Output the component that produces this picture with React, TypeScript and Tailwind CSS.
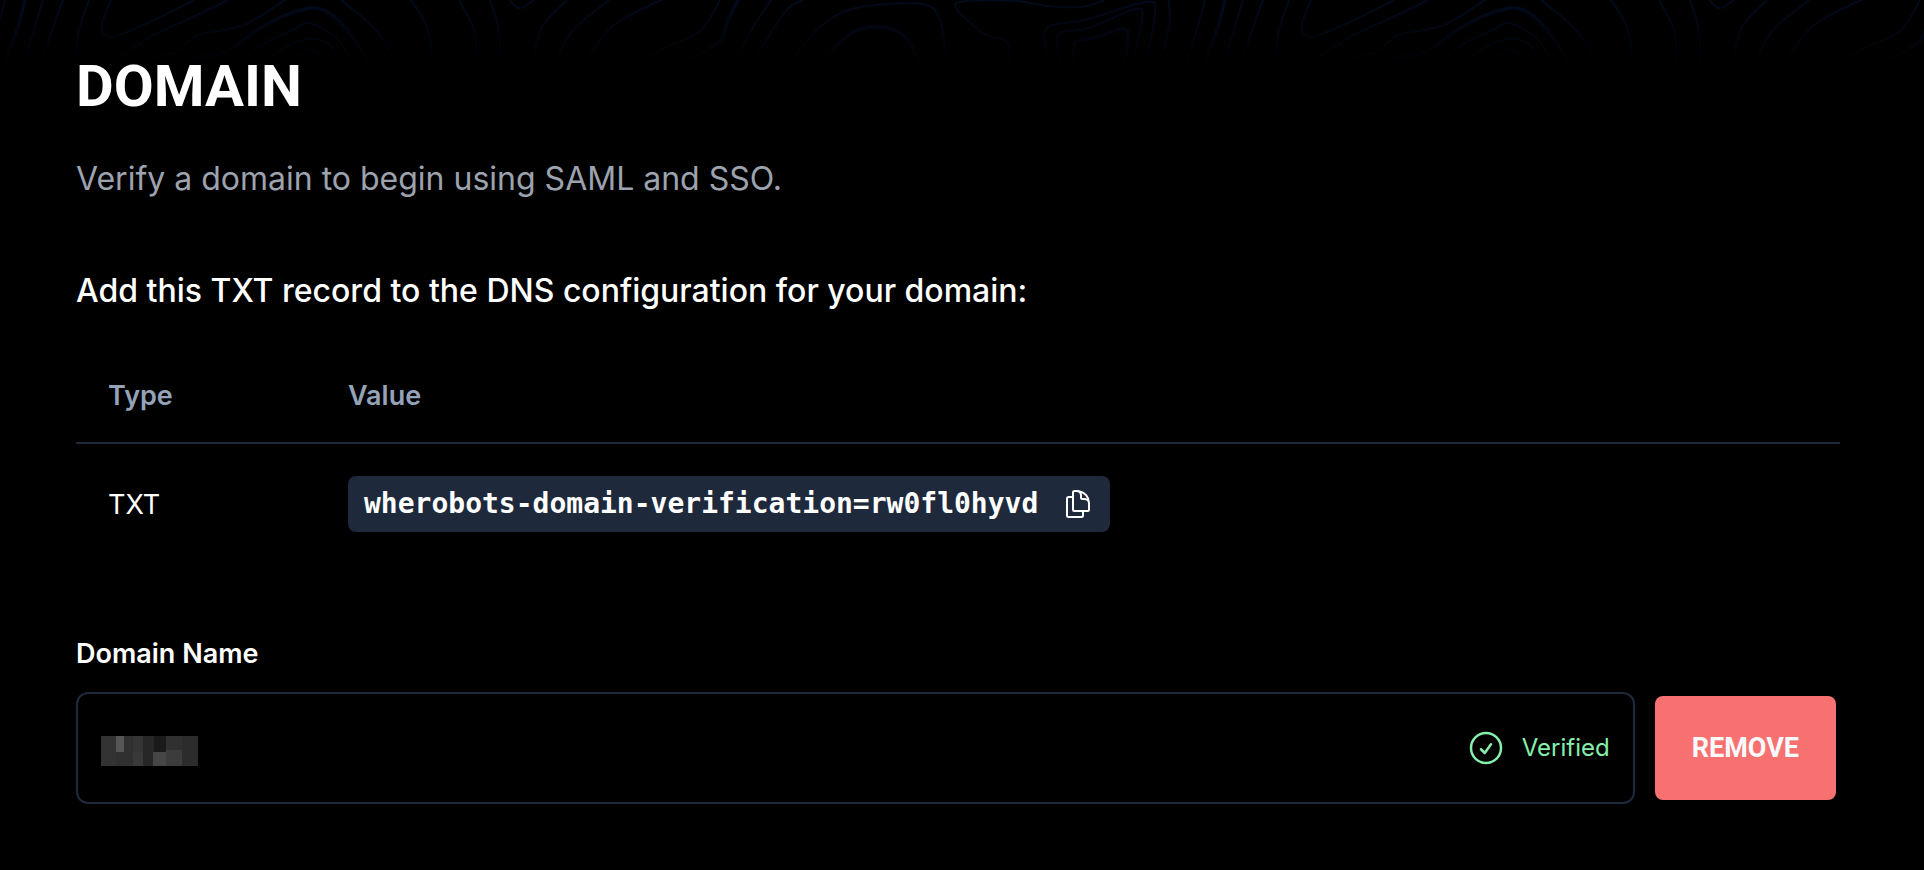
import { useState } from "react";
import { HiOutlineCheckCircle, HiOutlineDocumentDuplicate } from "react-icons/hi2";

type Point = [number, number];
type Contour = { points: Point[]; heavy?: boolean };

const TILE_WIDTH = 1200;
const TILES = [0, 1, 2, 3];

const CONTOURS: Contour[] = [
  { points: [[5, 0], [-4, 32], [-13, 63]] },
  { points: [[25, 0], [17, 30], [4, 65]], heavy: true },
  { points: [[43, 0], [34, 30], [24, 65]] },
  { points: [[63, 0], [52, 30], [41, 65]] },
  { points: [[89, 0], [79, 30], [74, 65]] },
  { points: [[111, 0], [102, 25], [111, 37], [154, 20], [194, 0]] },
  { points: [[228, 0], [191, 18], [154, 35], [109, 63]] },
  { points: [[285, 0], [244, 25], [199, 35], [176, 52], [135, 63]] },
  { points: [[188, 63], [203, 56], [224, 53], [269, 23], [314, 8], [343, 25], [370, 65]], heavy: true },
  { points: [[242, 63], [265, 43], [293, 30], [309, 23], [335, 37], [355, 65]] },
  { points: [[265, 63], [285, 47], [310, 39], [330, 45], [339, 65]] },
  { points: [[289, 62], [310, 49], [329, 63]] },
  { points: [[341, 0], [376, 30], [397, 63]] },
  { points: [[411, 0], [427, 27], [433, 63]] },
  { points: [[459, 0], [474, 30], [477, 65]] },
  { points: [[490, 0], [498, 27], [501, 63]] },
  { points: [[509, 0], [520, 8], [534, 0]] },
  { points: [[567, 0], [542, 27], [532, 65]] },
  { points: [[609, 0], [573, 30], [554, 63]] },
  { points: [[661, 0], [614, 25], [584, 63]] },
  { points: [[720, 0], [701, 30], [664, 48], [640, 63]] },
  { points: [[738, 0], [728, 20], [718, 43], [677, 65]], heavy: true },
  { points: [[771, 0], [750, 32], [740, 53], [726, 65]] },
  { points: [[803, 0], [785, 12], [752, 63]] },
  { points: [[791, 62], [820, 27], [856, 8], [922, 4], [940, 20], [946, 53], [953, 65]] },
  { points: [[815, 65], [852, 33], [881, 27], [905, 37], [922, 65]], heavy: true },
  { points: [[1105, 0], [1081, 7], [1048, 6], [1016, 1], [967, 1], [956, 8], [983, 33], [1007, 42], [1009, 62]] },
  { points: [[1049, 63], [1044, 37], [1052, 25], [1085, 20], [1146, 2], [1155, 13], [1146, 63]] },
  { points: [[1061, 63], [1058, 35], [1089, 28], [1136, 9], [1142, 20], [1133, 63]] },
  { points: [[1075, 63], [1075, 43], [1093, 38], [1124, 29], [1128, 43], [1122, 65]], heavy: true },
  { points: [[1169, 0], [1169, 27], [1159, 63]] },
];

/* Smooth curve through all points (Catmull-Rom converted to Bezier). */
function smoothPath(points: Point[]): string {
  let d = `M${points[0][0]} ${points[0][1]}`;
  for (let i = 0; i < points.length - 1; i++) {
    const p0 = points[Math.max(i - 1, 0)];
    const p1 = points[i];
    const p2 = points[i + 1];
    const p3 = points[Math.min(i + 2, points.length - 1)];
    d += ` C${p1[0] + (p2[0] - p0[0]) / 6} ${p1[1] + (p2[1] - p0[1]) / 6}`;
    d += ` ${p2[0] - (p3[0] - p1[0]) / 6} ${p2[1] - (p3[1] - p1[1]) / 6}`;
    d += ` ${p2[0]} ${p2[1]}`;
  }
  return d;
}

function Topography() {
  return (
    <svg aria-hidden="true" className="pointer-events-none absolute inset-x-0 top-0 h-[68px] w-full" fill="none">
      <defs>
        <linearGradient id="fade" x1="0" y1="0" x2="0" y2="68" gradientUnits="userSpaceOnUse">
          <stop offset="0" stopColor="#020a1c" />
          <stop offset="1" stopColor="#000000" />
        </linearGradient>
      </defs>
      {TILES.map((tile) => (
        <g key={tile} transform={`translate(${tile * TILE_WIDTH} 0)`} stroke="url(#fade)">
          {CONTOURS.map((contour, i) => (
            <path key={i} d={smoothPath(contour.points)} strokeWidth={contour.heavy ? 3.5 : 2} />
          ))}
        </g>
      ))}
    </svg>
  );
}

function MaskedValue() {
  return (
    <svg aria-hidden="true" className="mt-1.5 shrink-0" width="97" height="30" viewBox="0 0 97 30" shapeRendering="crispEdges">
      <rect width="97" height="30" fill="#303030" />
      <rect width="15" height="30" fill="#333333" />
      <rect x="15" width="8" height="16" fill="#565656" />
      <rect x="32" width="10" height="16" fill="#353535" />
      <rect x="32" y="16" width="10" height="14" fill="#393939" />
      <rect x="42" width="11" height="30" fill="#272727" />
      <rect x="53" width="12" height="16" fill="#1a1a1a" />
      <rect x="52" y="16" width="13" height="14" fill="#464646" />
      <rect x="65" y="14" width="16" height="16" fill="#3c3c3c" />
      <rect x="81" width="16" height="30" fill="#2c2c2c" />
    </svg>
  );
}

export default function App() {
  const record = "wherobots-domain-verification=rw0fl0hyvd";
  const [domain, setDomain] = useState("");

  return (
    <div className="relative min-h-screen bg-black font-['Inter',sans-serif] text-white">
      <Topography />
      <main className="relative pt-[50px] pr-[84px] pb-16 pl-[76px]">
        <h1 className="font-['Roboto',sans-serif] text-[58px] leading-[72px] font-bold">DOMAIN</h1>
        <p className="mt-[37px] text-[32px] leading-[40px] text-[#9ca3af]">
          Verify a domain to begin using SAML and SSO.
        </p>
        <p className="mt-[72px] text-[32px] leading-[40px] font-medium">
          Add this TXT record to the DNS configuration for your domain:
        </p>

        <table className="mt-9 w-full border-collapse text-left">
          <thead>
            <tr className="h-24 border-b-2 border-[#1e293b] text-[27px] text-[#94a3b8]">
              <th scope="col" className="w-60 px-8 pt-1 font-semibold">Type</th>
              <th scope="col" className="pt-1 pl-8 font-semibold">Value</th>
            </tr>
          </thead>
          <tbody>
            <tr className="h-[120px] text-[27px]">
              <td className="px-8 pt-1">TXT</td>
              <td className="pl-8">
                <div className="inline-flex h-14 items-center gap-6 rounded-lg bg-[#1e293b] px-4 align-middle">
                  <code className="font-['DejaVu_Sans_Mono',monospace] text-[28px] leading-[40px] font-bold">{record}</code>
                  <button type="button" aria-label="Copy TXT record" onClick={() => navigator.clipboard?.writeText(record)}>
                    <HiOutlineDocumentDuplicate className="size-8" />
                  </button>
                </div>
              </td>
            </tr>
          </tbody>
        </table>

        <label htmlFor="domain-name" className="mt-[71px] block text-[27px] leading-[40px] font-semibold">
          Domain Name
        </label>
        <div className="mt-[18px] flex items-center gap-5 pr-1">
          <div className="flex h-28 grow items-center rounded-xl border-2 border-[#1e293b] px-[23px]">
            <MaskedValue />
            <input
              id="domain-name"
              type="text"
              value={domain}
              onChange={(event) => setDomain(event.target.value)}
              className="h-full min-w-0 grow bg-transparent text-[27px] outline-none"
            />
            <div className="flex items-center gap-4 text-[#86efac]">
              <HiOutlineCheckCircle className="size-10" />
              <span className="text-[24px] leading-8">Verified</span>
            </div>
          </div>
          <button
            type="button"
            className="h-[104px] rounded-lg bg-[#f87171] px-[37px] font-['Roboto',sans-serif] text-[27px] font-bold text-[#f8fafc]"
          >
            REMOVE
          </button>
        </div>
      </main>
    </div>
  );
}
